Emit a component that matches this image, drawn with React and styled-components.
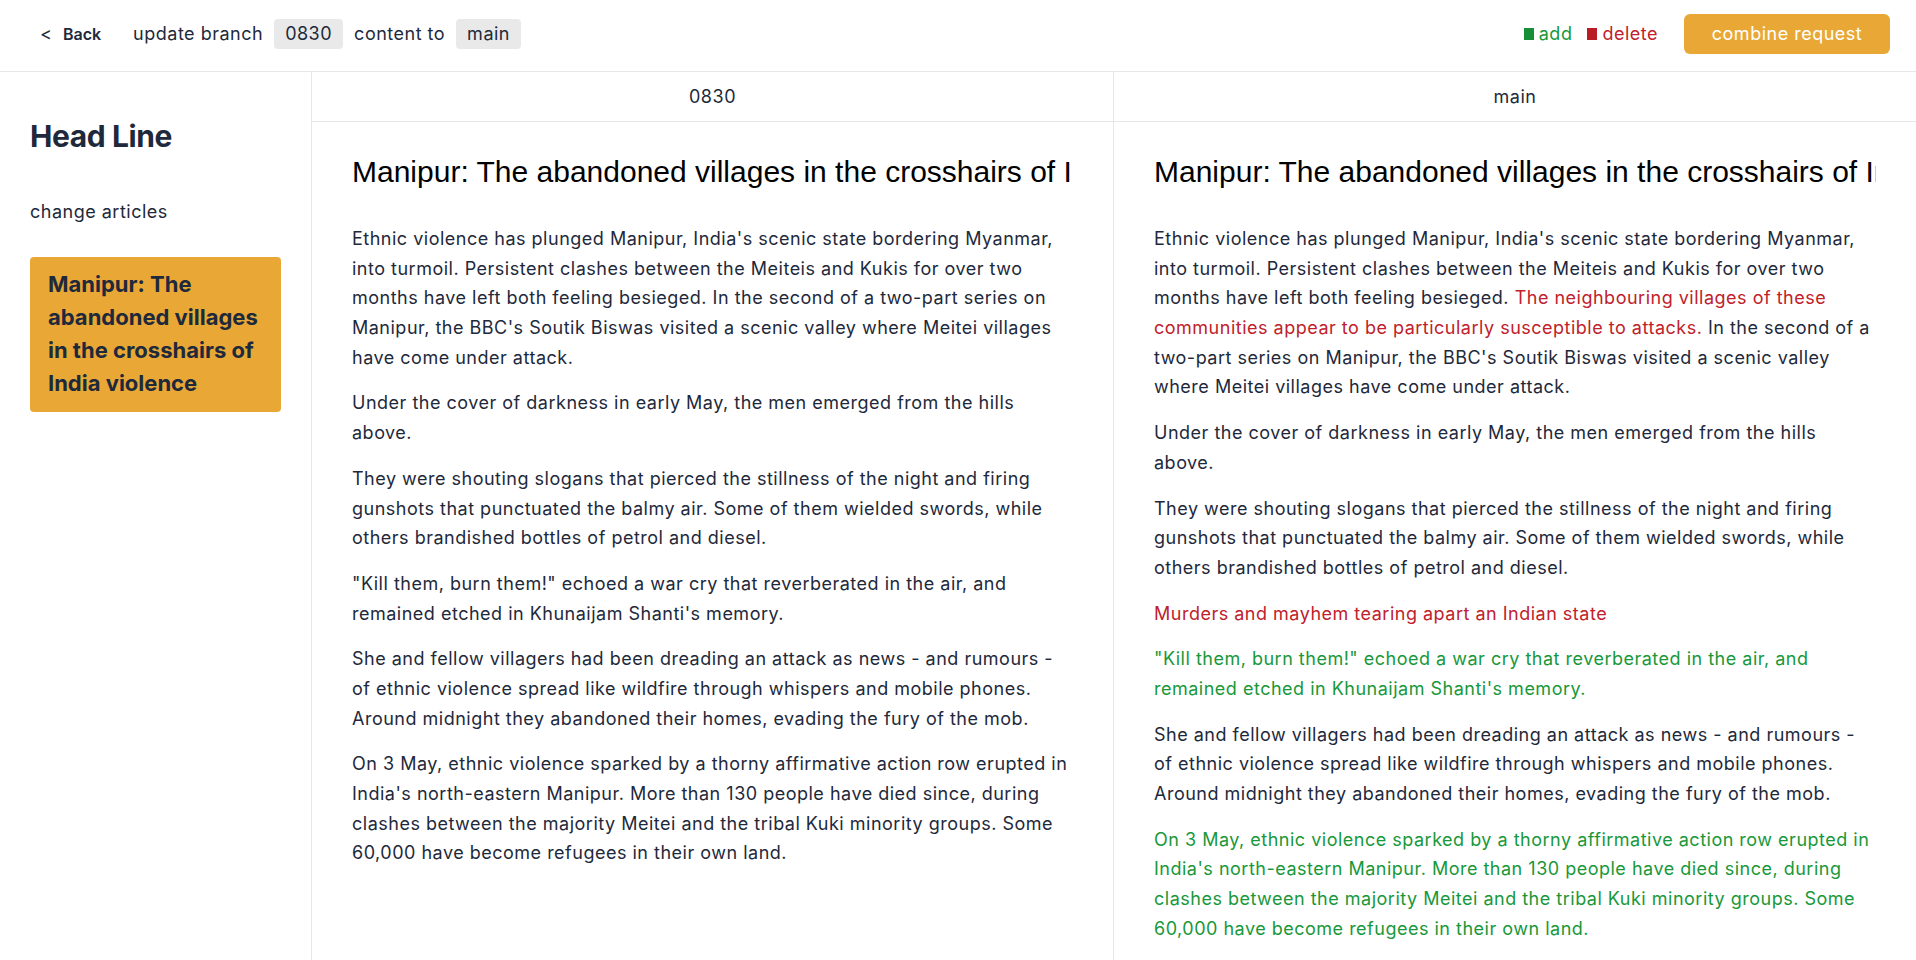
import React from "react"
import styled, { createGlobalStyle } from "styled-components"

const GlobalStyle = createGlobalStyle`
  html, body {
    margin: 0;
    padding: 0;
    background: #ffffff;
  }
  body {
    font-family: Inter, "Noto Sans", sans-serif;
    letter-spacing: 0.5px;
    color: #1e293b;
  }
  * {
    box-sizing: border-box;
  }
`

const title = "Manipur: The abandoned villages in the crosshairs of India violence"

const baseArticle = [
  [
    {
      text: "Ethnic violence has plunged Manipur, India's scenic state bordering Myanmar, into turmoil. Persistent clashes between the Meiteis and Kukis for over two months have left both feeling besieged. In the second of a two-part series on Manipur, the BBC's Soutik Biswas visited a scenic valley where Meitei villages have come under attack.",
    },
  ],
  [{ text: "Under the cover of darkness in early May, the men emerged from the hills above." }],
  [
    {
      text: "They were shouting slogans that pierced the stillness of the night and firing gunshots that punctuated the balmy air. Some of them wielded swords, while others brandished bottles of petrol and diesel.",
    },
  ],
  [
    {
      text: "\"Kill them, burn them!\" echoed a war cry that reverberated in the air, and remained etched in Khunaijam Shanti's memory.",
    },
  ],
  [
    {
      text: "She and fellow villagers had been dreading an attack as news - and rumours - of ethnic violence spread like wildfire through whispers and mobile phones. Around midnight they abandoned their homes, evading the fury of the mob.",
    },
  ],
  [
    {
      text: "On 3 May, ethnic violence sparked by a thorny affirmative action row erupted in India's north-eastern Manipur. More than 130 people have died since, during clashes between the majority Meitei and the tribal Kuki minority groups. Some 60,000 have become refugees in their own land.",
    },
  ],
]

const mainArticle = [
  [
    {
      text: "Ethnic violence has plunged Manipur, India's scenic state bordering Myanmar, into turmoil. Persistent clashes between the Meiteis and Kukis for over two months have left both feeling besieged. ",
    },
    {
      text: "The neighbouring villages of these communities appear to be particularly susceptible to attacks.",
      kind: "delete",
    },
    {
      text: " In the second of a two-part series on Manipur, the BBC's Soutik Biswas visited a scenic valley where Meitei villages have come under attack.",
    },
  ],
  baseArticle[1],
  baseArticle[2],
  [{ text: "Murders and mayhem tearing apart an Indian state", kind: "delete" }],
  [{ text: baseArticle[3][0].text, kind: "add" }],
  baseArticle[4],
  [{ text: baseArticle[5][0].text, kind: "add" }],
]

const branches = [
  { name: "0830", article: baseArticle },
  { name: "main", article: mainArticle },
]

function App() {
  return (
    <Page>
      <GlobalStyle />
      <TopBar>
        <TopLeft>
          <BackButton>
            <span className="chevron">&lt;</span>
            <span className="label">Back</span>
          </BackButton>
          <Summary>
            update branch <Chip>0830</Chip> content to <Chip>main</Chip>
          </Summary>
        </TopLeft>
        <TopRight>
          <Legend>
            <LegendItem kind="add">
              <i />
              add
            </LegendItem>
            <LegendItem kind="delete">
              <i />
              delete
            </LegendItem>
          </Legend>
          <CombineButton>combine request</CombineButton>
        </TopRight>
      </TopBar>

      <Main>
        <SideBar>
          <div className="sideTitle">Head Line</div>
          <div className="sideSub">change articles</div>
          <ArticleCard>{title}</ArticleCard>
        </SideBar>

        <Compare>
          {branches.map((branch) => (
            <Column key={branch.name}>
              <ColumnHead>{branch.name}</ColumnHead>
              <ColumnBody>
                <ArticleTitle>{title}</ArticleTitle>
                {branch.article.map((para, i) => (
                  <Paragraph key={i}>
                    {para.map((seg, j) => (
                      <Segment key={j} kind={seg.kind}>
                        {seg.text}
                      </Segment>
                    ))}
                  </Paragraph>
                ))}
              </ColumnBody>
            </Column>
          ))}
        </Compare>
      </Main>
    </Page>
  )
}

export default App

const Page = styled.div`
  width: 100%;
  height: 960px;
  display: flex;
  flex-direction: column;
  overflow: hidden;
`

const TopBar = styled.header`
  height: 72px;
  flex-shrink: 0;
  display: flex;
  align-items: center;
  justify-content: space-between;
  padding: 0 26px 4px 40px;
  border-bottom: 1px solid #e6e7ea;
`

const TopLeft = styled.div`
  display: flex;
  align-items: center;
  gap: 32px;
`

const BackButton = styled.div`
  display: flex;
  align-items: center;
  gap: 11px;
  color: #1e293b;
  letter-spacing: 0;
  cursor: pointer;

  .chevron {
    font-size: 18px;
  }
  .label {
    font-size: 16px;
    font-weight: 600;
  }
`

const Summary = styled.div`
  display: flex;
  align-items: center;
  gap: 11px;
  font-size: 18px;
  color: #1e293b;
`

const Chip = styled.span`
  display: inline-flex;
  align-items: center;
  height: 30px;
  padding: 0 11px;
  border-radius: 4px;
  background: #e9e9ea;
`

const TopRight = styled.div`
  display: flex;
  align-items: center;
  gap: 26px;
`

const Legend = styled.div`
  display: flex;
  align-items: center;
  gap: 15px;
`

const LegendItem = styled.span`
  display: flex;
  align-items: center;
  gap: 5px;
  font-size: 18px;
  color: ${(p) => (p.kind === "add" ? "#18983a" : "#c0212b")};

  i {
    display: inline-block;
    width: 10px;
    height: 12px;
    background: ${(p) => (p.kind === "add" ? "#168f37" : "#b91c25")};
  }
`

const CombineButton = styled.button`
  width: 206px;
  height: 40px;
  border: none;
  border-radius: 6px;
  background: #e9a836;
  color: #ffffff;
  font-family: Inter, "Noto Sans", sans-serif;
  font-size: 18px;
  letter-spacing: 0.5px;
  cursor: pointer;
`

const Main = styled.div`
  flex: 1;
  display: flex;
  min-height: 0;
`

const SideBar = styled.aside`
  width: 312px;
  flex-shrink: 0;
  padding: 45px 30px;
  border-right: 1px solid #e6e7ea;

  .sideTitle {
    font-size: 30px;
    font-weight: 700;
    line-height: 38px;
    letter-spacing: -0.4px;
    color: #1e293b;
  }

  .sideSub {
    margin-top: 43px;
    font-size: 18px;
    line-height: 27px;
    color: #1e293b;
  }
`

const ArticleCard = styled.div`
  margin-top: 32px;
  padding: 11px 18px 12px;
  border-radius: 4px;
  background: #e9a836;
  color: #1e293b;
  font-size: 22px;
  font-weight: 700;
  line-height: 33px;
  letter-spacing: 0;
`

const Compare = styled.div`
  flex: 1;
  display: grid;
  grid-template-columns: 1fr 1fr;
  min-width: 0;
`

const Column = styled.section`
  min-width: 0;
  border-right: 1px solid #e6e7ea;

  &:last-child {
    border-right: none;
  }
`

const ColumnHead = styled.div`
  height: 50px;
  display: flex;
  align-items: center;
  justify-content: center;
  border-bottom: 1px solid #e6e7ea;
  font-size: 18px;
  color: #1e293b;
`

const ColumnBody = styled.div`
  padding: 33px 40px 0;
`

const ArticleTitle = styled.h1`
  margin: 0 0 35px;
  font-family: "Liberation Sans", Arial, sans-serif;
  font-size: 30px;
  font-weight: 400;
  letter-spacing: 0;
  color: #000000;
  white-space: nowrap;
  overflow: hidden;
`

const Paragraph = styled.p`
  margin: 0 0 16px;
  font-size: 18px;
  line-height: 1.65;
  color: #1e293b;
`

const Segment = styled.span`
  color: ${(p) =>
    p.kind === "add" ? "#18983a" : p.kind === "delete" ? "#c0212b" : "inherit"};
`
